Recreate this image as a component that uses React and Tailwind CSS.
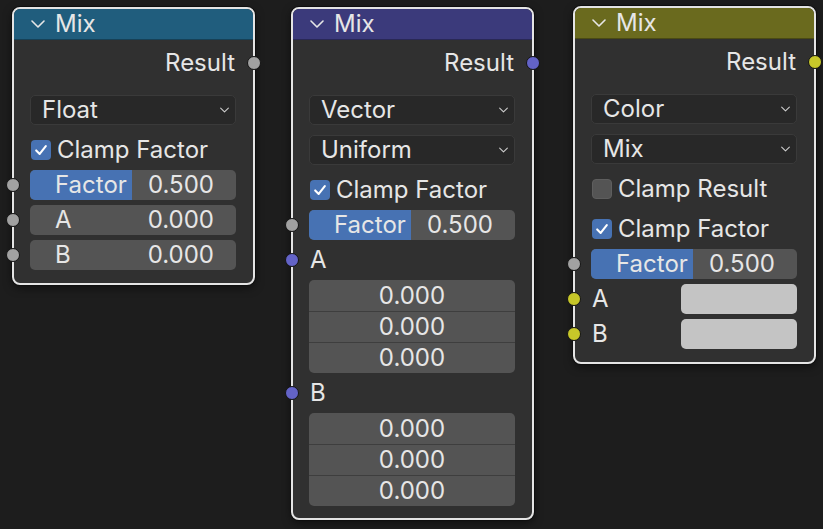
import React from 'react';

const FONT = { fontFamily: 'Inter, "Noto Sans", sans-serif' };

// sockets sit on the node's border line
const Socket = ({ color, side = 'left' }) => (
  <span
    className={`absolute z-10 top-1/2 -translate-y-1/2 w-[14px] h-[14px] rounded-full border border-[#141414] ${
      side === 'left' ? 'left-[-24px]' : 'right-[-8px]'
    }`}
    style={{ backgroundColor: color }}
  />
);

const Chevron = ({ className }) => (
  <svg viewBox="0 0 14 8" className={className} fill="none" stroke="currentColor" strokeWidth="1.6" strokeLinecap="round" strokeLinejoin="round">
    <polyline points="1,1 7,7 13,1" />
  </svg>
);

const Header = ({ color }) => (
  <div className={`h-[31px] flex items-center rounded-t-[6px] border-b border-black/30 ${color}`}>
    <Chevron className="w-[14px] h-[8px] ml-[17px] text-[#e6e6e6]" />
    <span className="ml-[10px] text-[24px] leading-none text-[#e6e6e6] pb-[1px]">Mix</span>
  </div>
);

const ResultRow = ({ socket }) => (
  <div className="relative h-[30px] mt-[8px] flex items-center justify-end pr-[18px]">
    <span className="text-[24px] leading-none text-[#e6e6e6]">Result</span>
    <Socket color={socket} side="right" />
  </div>
);

const Dropdown = ({ label, className = '' }) => (
  <div className={`ml-[16px] mr-[17px] h-[30px] rounded-[5px] bg-[#282828] border border-[#3a3a3a] flex items-center justify-between pl-[11px] pr-[6px] ${className}`}>
    <span className="text-[24px] leading-none text-[#e6e6e6]">{label}</span>
    <Chevron className="w-[9px] h-[6px] text-[#d0d0d0]" />
  </div>
);

const Checkbox = ({ label, checked, className = '' }) => (
  <div className={`ml-[16px] mr-[17px] h-[30px] flex items-center ${className}`}>
    <span
      className={`w-[20px] h-[20px] ml-[1px] rounded-[4px] flex items-center justify-center ${
        checked ? 'bg-[#4772b3]' : 'bg-[#545454] border border-[#5e5e5e]'
      }`}
    >
      {checked && (
        <svg viewBox="0 0 16 16" className="w-[14px] h-[14px]" fill="none" stroke="#ffffff" strokeWidth="2.4" strokeLinecap="round" strokeLinejoin="round">
          <polyline points="2.5,8.5 6.5,12.5 13.5,3.5" />
        </svg>
      )}
    </span>
    <span className="ml-[6px] text-[24px] leading-none text-[#e6e6e6]">{label}</span>
  </div>
);

const FactorSlider = ({ className = '' }) => (
  <div className={`relative ml-[16px] mr-[17px] h-[30px] ${className}`}>
    <Socket color="#a1a1a1" />
    <div className="h-full rounded-[5px] bg-[#545454] overflow-hidden flex">
      <div className="w-[102px] h-full bg-[#4772b3]" />
      <div className="flex-1" />
    </div>
    <div className="absolute inset-0 flex items-center justify-between pl-[25px] pr-[22px]">
      <span className="text-[24px] leading-none text-[#e6e6e6]">Factor</span>
      <span className="text-[24px] leading-none text-[#e6e6e6]">0.500</span>
    </div>
  </div>
);

const ValueField = ({ label, value, socket, className = '' }) => (
  <div className={`relative ml-[16px] mr-[17px] h-[30px] rounded-[5px] bg-[#545454] flex items-center justify-between pl-[25px] pr-[22px] ${className}`}>
    <Socket color={socket} />
    <span className="text-[24px] leading-none text-[#e6e6e6]">{label}</span>
    <span className="text-[24px] leading-none text-[#e6e6e6]">{value}</span>
  </div>
);

const Label = ({ label, socket, className = '' }) => (
  <div className={`relative ml-[16px] mr-[17px] h-[30px] flex items-center ${className}`}>
    <Socket color={socket} />
    <span className="ml-[1px] text-[24px] leading-none text-[#e6e6e6]">{label}</span>
  </div>
);

const VectorFields = ({ className = '' }) => (
  <div className={`ml-[16px] mr-[17px] rounded-[5px] bg-[#545454] overflow-hidden flex flex-col ${className}`}>
    {[0, 1, 2].map((i) => (
      <div
        key={i}
        className={`h-[31px] flex items-center justify-center ${i > 0 ? 'border-t border-[#3e3e3e]' : ''}`}
      >
        <span className="text-[24px] leading-none text-[#e6e6e6]">0.000</span>
      </div>
    ))}
  </div>
);

const ColorField = ({ label, className = '' }) => (
  <div className={`relative ml-[16px] mr-[17px] h-[30px] flex items-center justify-between ${className}`}>
    <Socket color="#c7c729" />
    <span className="ml-[1px] text-[24px] leading-none text-[#e6e6e6]">{label}</span>
    <div className="w-[116px] h-full rounded-[5px] bg-[#c4c4c4]" />
  </div>
);

const Node = ({ header, children, className = '' }) => (
  <div
    className={`w-[243px] rounded-[8px] border-2 border-[#e4e4e4] bg-[#303030] shadow-[0_0_0_1px_#0e0e0e,0_3px_8px_rgba(0,0,0,0.5)] ${className}`}
  >
    <Header color={header} />
    {children}
  </div>
);

export default function App() {
  return (
    <div className="w-[823px] h-[529px] bg-[#1d1d1d] overflow-hidden flex items-start" style={FONT}>
      <Node header="bg-[#205d7d]" className="ml-[12px] mt-[7px] pb-[13px]">
        <ResultRow socket="#a1a1a1" />
        <Dropdown label="Float" className="mt-[17px]" />
        <Checkbox label="Clamp Factor" checked className="mt-[10px]" />
        <FactorSlider className="mt-[5px]" />
        <ValueField label="A" value="0.000" socket="#a1a1a1" className="mt-[5px]" />
        <ValueField label="B" value="0.000" socket="#a1a1a1" className="mt-[5px]" />
      </Node>

      <Node header="bg-[#3b3a7b]" className="ml-[36px] mt-[7px] pb-[12px]">
        <ResultRow socket="#6363c7" />
        <Dropdown label="Vector" className="mt-[17px]" />
        <Dropdown label="Uniform" className="mt-[10px]" />
        <Checkbox label="Clamp Factor" checked className="mt-[10px]" />
        <FactorSlider className="mt-[5px]" />
        <Label label="A" socket="#6363c7" className="mt-[5px]" />
        <VectorFields className="mt-[5px]" />
        <Label label="B" socket="#6363c7" className="mt-[5px]" />
        <VectorFields className="mt-[5px]" />
      </Node>

      <Node header="bg-[#6a6a1e]" className="ml-[39px] mt-[6px] pb-[13px]">
        <ResultRow socket="#c7c729" />
        <Dropdown label="Color" className="mt-[17px]" />
        <Dropdown label="Mix" className="mt-[10px]" />
        <Checkbox label="Clamp Result" className="mt-[10px]" />
        <Checkbox label="Clamp Factor" checked className="mt-[10px]" />
        <FactorSlider className="mt-[5px]" />
        <ColorField label="A" className="mt-[5px]" />
        <ColorField label="B" className="mt-[5px]" />
      </Node>
    </div>
  );
}
